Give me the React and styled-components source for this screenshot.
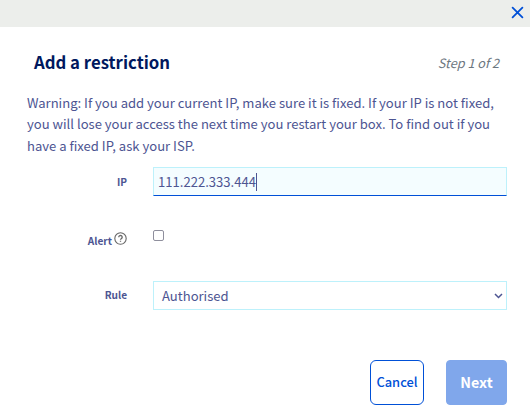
import React from "react";
import styled, { createGlobalStyle } from "styled-components";

const Global = createGlobalStyle`
  *, *::before, *::after { box-sizing: border-box; }
  body {
    margin: 0;
    background: #fff;
    color: #4d5592;
    font-family: "Noto Sans CJK SC", "Noto Sans", sans-serif;
    font-size: 13.07px;
    overflow: hidden;
  }
  button, input, select { font: inherit; color: inherit; }
`;

const Modal = styled.main`
  width: 530px;
  height: 417px;
  display: flex;
  flex-direction: column;
`;

const TopBar = styled.div`
  height: 27px;
  flex: none;
  background: #eceeeb;
  display: flex;
  justify-content: flex-end;
  padding: 6px 6px 0 0;
`;

const CloseButton = styled.button`
  width: 13px;
  height: 13px;
  padding: 0;
  border: 0;
  background: none;
  svg { display: block; }
`;

const Header = styled.header`
  height: 65px;
  flex: none;
  display: flex;
  justify-content: space-between;
  padding: 23px 31px 0 34px;
`;

const Title = styled.h1`
  margin: 0;
  color: #00185e;
  font-size: 16.75px;
  font-weight: 700;
  line-height: 25px;
  white-space: nowrap;
`;

const Step = styled.span`
  color: #6c7680;
  font-size: 12.7px;
  font-style: italic;
  line-height: 26px;
  white-space: nowrap;
`;

const Warning = styled.p`
  margin: 0 0 0 27px;
  height: 75px;
  flex: none;
  line-height: 21.4px;
  white-space: nowrap;
`;

const Line = styled.span`
  display: block;
`;

const Row = styled.div`
  height: ${(p) => p.$height}px;
  flex: none;
  display: grid;
  grid-template-columns: 127px 354px;
  column-gap: 26px;
  align-items: start;
`;

const Label = styled.label`
  display: flex;
  justify-content: flex-end;
  gap: 2px;
  padding-top: ${(p) => p.$top}px;
  font-size: 10.1px;
  font-weight: 700;
  line-height: 16px;
`;

const HelpIcon = styled.svg`
  margin-top: -1px;
`;

const IpField = styled.div`
  height: 29px;
  display: flex;
  align-items: center;
  padding: 0 0 0 4px;
  border: 1px solid #bdf1fb;
  border-bottom-color: #0050d7;
  background: #f4fdff;
  line-height: 20px;
`;

const Caret = styled.span`
  width: 1px;
  height: 18px;
  background: #4d5592;
`;

const Checkbox = styled.span`
  width: 11px;
  height: 11px;
  border: 1px solid #8f8f9d;
  border-radius: 2px;
`;

const RuleSelect = styled.div`
  height: 29px;
  display: flex;
  align-items: center;
  justify-content: space-between;
  padding: 0 3px 0 8px;
  border: 1px solid #bdf1fb;
  line-height: 20px;
`;

const Footer = styled.footer`
  display: flex;
  justify-content: flex-end;
  gap: 22px;
  padding: 0 23px 0 0;
`;

const Button = styled.button`
  width: ${(p) => (p.$filled ? 61 : 54)}px;
  height: 45px;
  padding: 0 0 2px;
  border: 1px solid ${(p) => (p.$filled ? "#80a7eb" : "#0050d7")};
  border-radius: ${(p) => (p.$filled ? 4 : 6)}px;
  background: ${(p) => (p.$filled ? "#80a7eb" : "#fff")};
  color: ${(p) => (p.$filled ? "#fff" : "#0050d7")};
  font-size: ${(p) => (p.$filled ? 14.3 : 12.9)}px;
  font-weight: ${(p) => (p.$filled ? 700 : 500)};
  line-height: 20px;
`;

export default function App() {
  return (
    <>
      <Global />
      <Modal>
        <TopBar>
          <CloseButton aria-label="Close">
            <svg width="13" height="13" viewBox="0 0 13 13" fill="none" stroke="#0050d7" strokeWidth="1.8" strokeLinecap="round">
              <path d="M1.6 1.6 11.4 11.4M11.4 1.6 1.6 11.4" />
            </svg>
          </CloseButton>
        </TopBar>
        <Header>
          <Title>Add a restriction</Title>
          <Step>Step 1 of 2</Step>
        </Header>
        <Warning>
          <Line>Warning: If you add your current IP, make sure it is fixed. If your IP is not fixed,</Line>
          <Line>you will lose your access the next time you restart your box. To find out if you</Line>
          <Line>have a fixed IP, ask your ISP.</Line>
        </Warning>
        <Row $height={63}>
          <Label $top={7}>IP</Label>
          <IpField>
            111.222.333.444
            <Caret />
          </IpField>
        </Row>
        <Row $height={51}>
          <Label $top={3}>
            Alert
            <HelpIcon width="13" height="13" viewBox="0 0 13 13" fill="none" stroke="#666" strokeWidth="1.1">
              <circle cx="6.5" cy="6.5" r="5.7" />
              <path d="M4.8 5.2a1.7 1.6 0 1 1 2.7 1.2c-.7.5-1 .7-1 1.3M6.5 8.7v1.1" strokeWidth="1.3" />
            </HelpIcon>
          </Label>
          <Checkbox role="checkbox" aria-checked="false" />
        </Row>
        <Row $height={79}>
          <Label $top={6}>Rule</Label>
          <RuleSelect>
            Authorised
            <svg width="9" height="6" viewBox="0 0 9 6" fill="none" stroke="#4d5592" strokeWidth="1.5">
              <path d="M1 1l3.5 3.5L8 1" />
            </svg>
          </RuleSelect>
        </Row>
        <Footer>
          <Button>Cancel</Button>
          <Button $filled>Next</Button>
        </Footer>
      </Modal>
    </>
  );
}
